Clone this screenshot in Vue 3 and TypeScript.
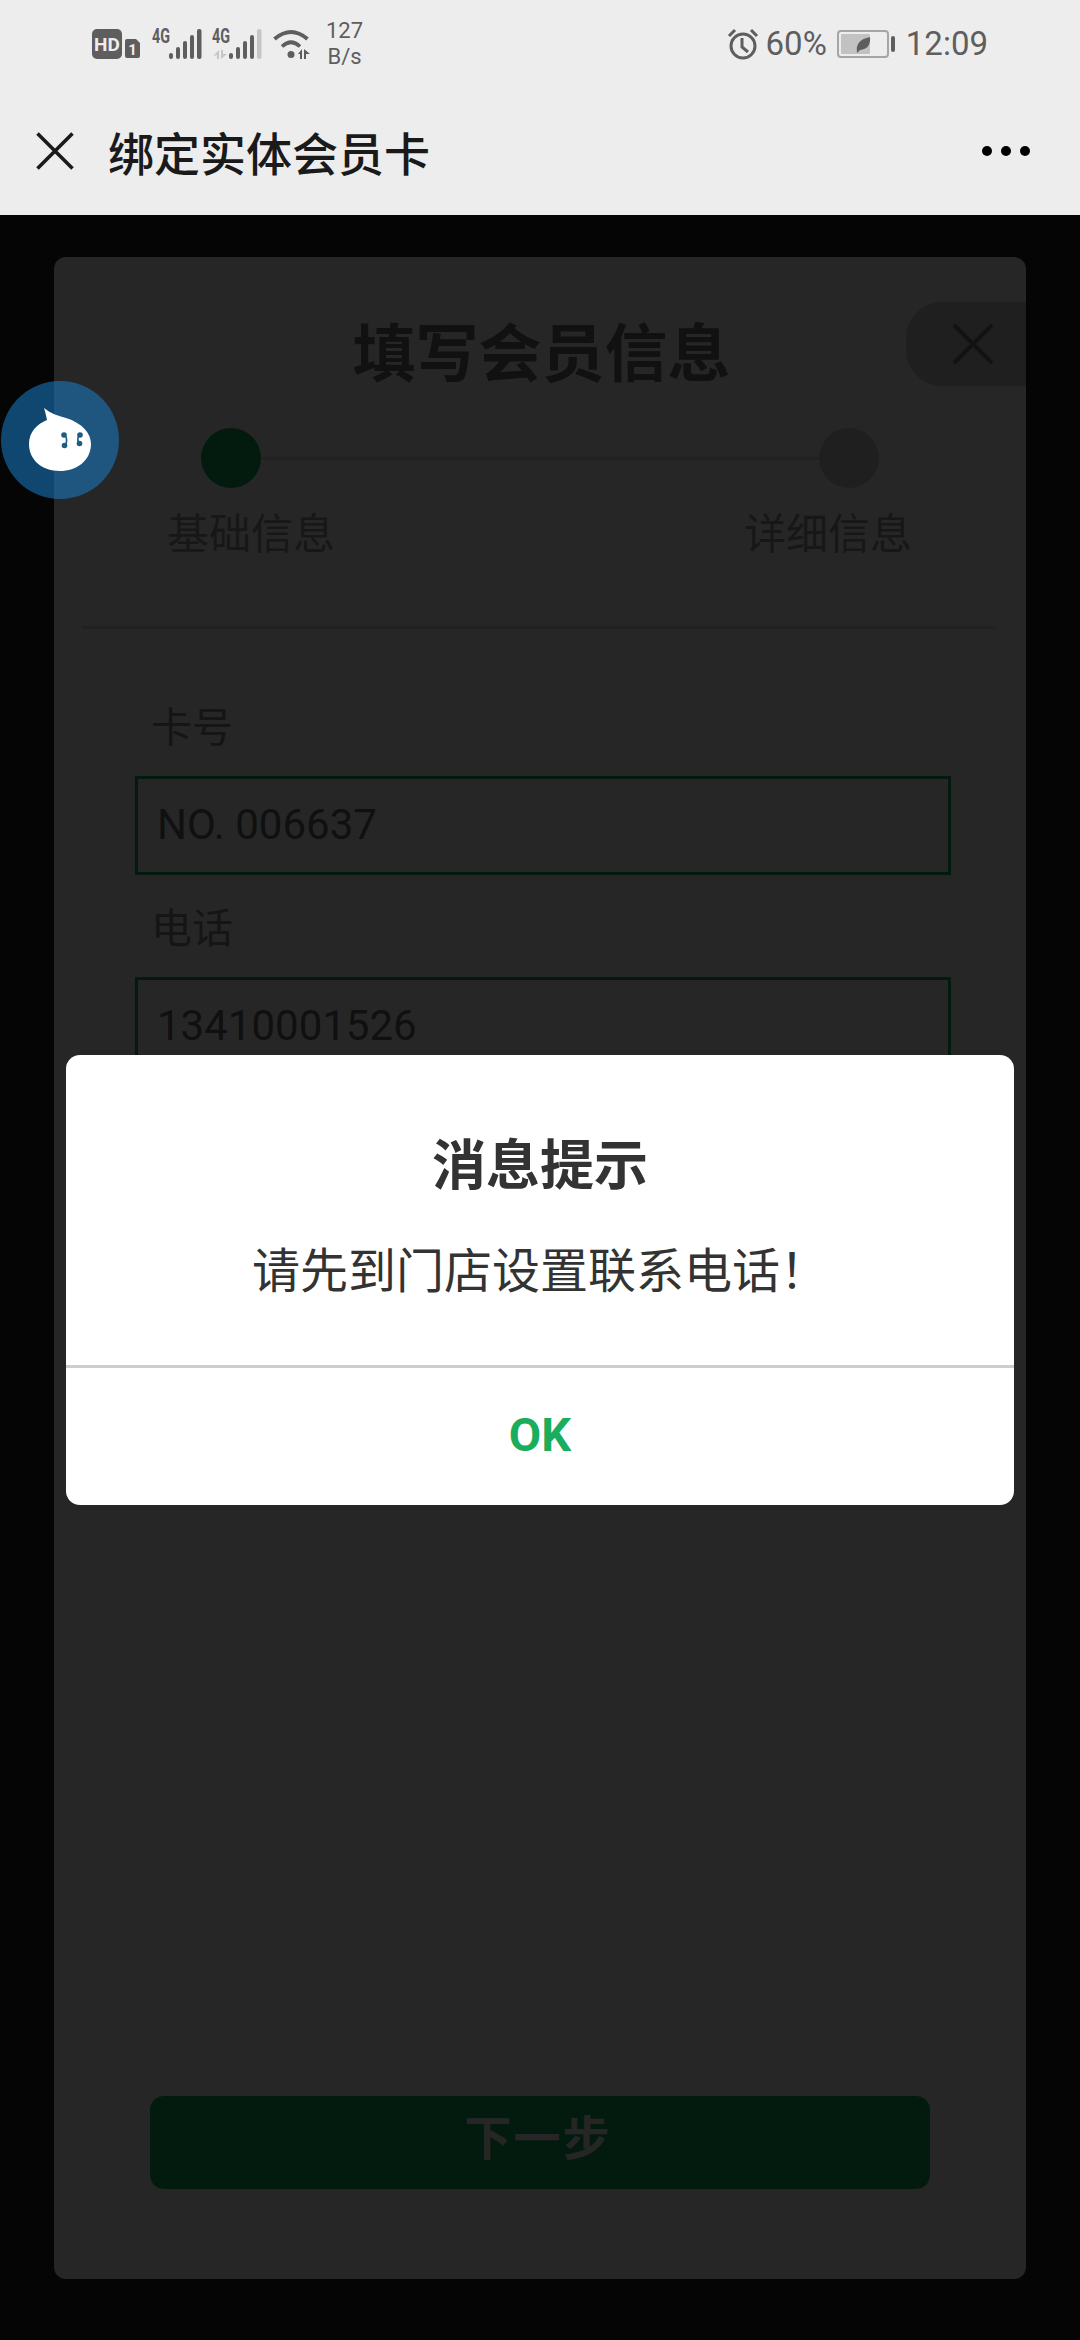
<script setup lang="ts">
const signals = [
  { id: 'sim1', arrows: false, lastColor: '#5e5e5e' },
  { id: 'sim2', arrows: true, lastColor: '#c6c6c6' },
];

const bars = [
  { x: 17, h: 6 },
  { x: 24, h: 12 },
  { x: 31, h: 18 },
  { x: 38, h: 24 },
];
</script>

<template>
  <div class="page">
    <header class="top">
      <div class="status">
        <div class="status-left">
          <svg class="hd" width="48" height="30" viewBox="0 0 48 30">
            <rect width="30" height="30" rx="5" fill="#5e5e5e" />
            <text x="15" y="21.5" text-anchor="middle" class="hd-text">HD</text>
            <path d="M35 10h9l4 4v13a2 2 0 0 1-2 2H35a2 2 0 0 1-2-2V12a2 2 0 0 1 2-2z" fill="#5e5e5e" />
            <text x="40.5" y="25.5" text-anchor="middle" class="sim-text">1</text>
          </svg>
          <svg
            v-for="s in signals"
            :key="s.id"
            class="signal"
            width="52"
            height="40"
            viewBox="0 -6 52 40"
          >
            <text x="0" y="16" class="four-g" textLength="18" lengthAdjust="spacingAndGlyphs">4G</text>
            <rect
              v-for="b in bars"
              :key="b.x"
              :x="b.x"
              :y="32 - b.h"
              width="4"
              :height="b.h"
              rx="2"
              fill="#5e5e5e"
            />
            <rect x="45" y="2" width="4.5" height="30" rx="2" :fill="s.lastColor" />
            <path v-if="s.arrows" d="M1 29l6-6v9H5v-4zM9 23h2v4l4 0-6 5z" fill="#c6c6c6" />
          </svg>
          <svg class="wifi" width="37" height="30" viewBox="0 0 37 30">
            <path d="M1.500 10Q18 -4 34.500 10" fill="none" stroke="#5e5e5e" stroke-width="4" />
            <path d="M9 17.500Q18 9 27 17.500" fill="none" stroke="#5e5e5e" stroke-width="3.6" />
            <circle cx="18" cy="25.500" r="3.500" fill="#5e5e5e" />
            <path d="M25 25l4-5v10h-2v-5zM31 20l6 5-4 0v5h-2z" fill="#5e5e5e" />
          </svg>
          <div class="speed"><span>127</span><span>B/s</span></div>
        </div>
        <div class="status-right">
          <svg width="32" height="32" viewBox="0 0 32 32">
            <circle cx="16" cy="18" r="12" fill="none" stroke="#5e5e5e" stroke-width="3" />
            <path d="M15 10v9l6 5" fill="none" stroke="#5e5e5e" stroke-width="3" />
            <path d="M2 8l6-6M30 8l-6-6" fill="none" stroke="#5e5e5e" stroke-width="3" />
          </svg>
          <span class="pct">60%</span>
          <svg class="battery" width="59" height="28" viewBox="0 0 59 28">
            <rect x="1" y="1" width="50" height="26" rx="3" fill="none" stroke="#a5a5a5" stroke-width="2" />
            <rect x="4" y="4" width="29" height="20" rx="1" fill="#c2c2c2" />
            <rect x="54" y="6" width="4" height="16" rx="2" fill="#5e5e5e" />
            <path d="M20 22Q18 10 33 7Q34 19 23 20L20 23z" fill="#5e5e5e" />
          </svg>
          <span class="time">12:09</span>
        </div>
      </div>
      <nav class="nav">
        <svg width="38" height="38" viewBox="0 0 38 38">
          <path d="M1.500 1.500L36.500 36.500M36.500 1.500L1.500 36.500" fill="none" stroke="#1a1a1a" stroke-width="3.6" />
        </svg>
        <h1 class="nav-title">绑定实体会员卡</h1>
        <div class="dots"><i></i><i></i><i></i></div>
      </nav>
    </header>

    <main class="body">
      <section class="card">
        <div class="card-close">
          <svg width="42" height="42" viewBox="0 0 42 42">
            <path d="M2 2L40 40M40 2L2 40" fill="none" stroke="#777" stroke-width="4" />
          </svg>
        </div>
        <h2 class="card-title">填写会员信息</h2>
        <div class="steps">
          <span class="step-dot on"></span>
          <span class="step-line"></span>
          <span class="step-dot"></span>
        </div>
        <div class="step-names">
          <span>基础信息</span>
          <span>详细信息</span>
        </div>
        <div class="rule"></div>
        <div class="fields">
          <div class="field">
            <label>卡号</label>
            <div class="input">NO. 006637</div>
          </div>
          <div class="field">
            <label>电话</label>
            <div class="input">13410001526</div>
          </div>
        </div>
        <button class="next">下一步</button>
      </section>

      <div class="mask"></div>

      <svg class="bot" width="120" height="120" viewBox="0 0 120 120">
        <circle cx="60" cy="60" r="59" fill="rgba(24,131,207,0.53)" />
        <path
          d="M44 28C50 33 58 36 66 38C82 43 91 53 91 64C91 81 76 91 60 91C42 91 29 80 29 64C29 52 37 44 47 40C46 35 45 31 44 28Z"
          fill="#fff"
        />
        <g fill="#1d5c83">
          <circle cx="64" cy="55" r="2.800" />
          <circle cx="64.500" cy="65.500" r="2.800" />
          <circle cx="80" cy="55" r="2.800" />
          <circle cx="79.500" cy="63.500" r="2.800" />
        </g>
        <path d="M65 55Q68 60 65.500 65M79 55Q77 59 78.500 63" fill="none" stroke="#1d5c83" stroke-width="1.600" />
      </svg>

      <div class="dialog">
        <div class="dialog-body">
          <h3>消息提示</h3>
          <p>请先到门店设置联系电话！</p>
        </div>
        <div class="dialog-foot">OK</div>
      </div>
    </main>
  </div>
</template>

<style scoped>
.page {
  width: 1080px;
  height: 2340px;
  display: flex;
  flex-direction: column;
  font-family: Roboto, "Noto Sans CJK SC", sans-serif;
  overflow: hidden;
}

.top {
  background: #ededed;
  height: 215px;
  flex: none;
}

.status {
  height: 91px;
  padding: 0 92px 3px 92px;
  box-sizing: border-box;
  display: flex;
  align-items: center;
  justify-content: space-between;
  color: #5e5e5e;
}

.status-left,
.status-right {
  display: flex;
  align-items: center;
}

.hd-text {
  font: 700 19px Roboto, sans-serif;
  fill: #ededed;
}

.sim-text {
  font: 700 15px Roboto, sans-serif;
  fill: #ededed;
}

.four-g {
  font: 700 20px Roboto, sans-serif;
  fill: #5e5e5e;
}

.signal {
  margin: -6px 0 0 12px;
}

.signal + .signal {
  margin-left: 8px;
}

.wifi {
  margin-left: 9px;
}

.speed {
  display: flex;
  flex-direction: column;
  align-items: center;
  margin-left: 16px;
  font-size: 22px;
  line-height: 26px;
}

.pct,
.time {
  font-size: 33px;
  line-height: 40px;
}

.pct {
  margin-left: 7px;
}

.battery {
  margin-left: 10px;
}

.time {
  margin-left: 10px;
}

.nav {
  height: 120px;
  padding: 0 50px 0 36px;
  display: flex;
  align-items: center;
}

.nav-title {
  margin: 0 0 0 34px;
  flex: 1;
  font-size: 46px;
  font-weight: 500;
  color: #1a1a1a;
}

.dots {
  display: flex;
  gap: 9px;
}

.dots i {
  width: 10px;
  height: 10px;
  border-radius: 50%;
  background: #000;
}

.body {
  flex: 1;
  position: relative;
  background: #212121;
  padding: 42px 54px 61px;
  display: flex;
}

.card {
  flex: 1;
  position: relative;
  background: #fff;
  border-radius: 12px;
  display: flex;
  flex-direction: column;
  overflow: hidden;
}

.card-close {
  position: absolute;
  top: 45px;
  right: 0;
  width: 120px;
  height: 84px;
  background: #cfcfcf;
  border-radius: 36px 0 0 36px;
  box-sizing: border-box;
  padding: 21px 0 0 46px;
}

.card-title {
  margin: 58px 0 0;
  padding-left: 3px;
  text-align: center;
  font-size: 63px;
  line-height: 80px;
  font-weight: 700;
  color: #707070;
}

.steps {
  margin-top: 33px;
  padding: 0 147px;
  display: flex;
  align-items: center;
}

.step-dot {
  width: 60px;
  height: 60px;
  border-radius: 50%;
  background: #cfcfcf;
  flex: none;
}

.step-dot.on {
  background: #1aad5e;
}

.step-line {
  flex: 1;
  height: 3px;
  background: #e0e0e0;
}

.step-names {
  margin-top: 19px;
  padding: 0 114px 0 113px;
  display: flex;
  justify-content: space-between;
  font-size: 42px;
  line-height: 56px;
  color: #999;
}

.rule {
  margin: 63px 31px 0 28px;
  height: 3px;
  background: #dcdcdc;
}

.fields {
  margin-top: 71px;
  padding: 0 75px 0 81px;
}

.field {
  margin-bottom: 26px;
}

.field label {
  display: block;
  padding-left: 16px;
  font-size: 41px;
  line-height: 56px;
  color: #8c8c8c;
}

.input {
  margin-top: 20px;
  height: 99px;
  box-sizing: border-box;
  border: 3px solid #1aad5e;
  padding: 0 0 2px 19px;
  display: flex;
  align-items: center;
  font-size: 42px;
  color: #6a6a6a;
}

.next {
  margin: auto 96px 90px;
  height: 93px;
  border: 0;
  border-radius: 14px;
  background: #1aad5e;
  color: #fff;
  font-family: inherit;
  font-size: 47px;
  font-weight: 700;
  letter-spacing: 2px;
  padding: 0 4px 16px 0;
}

.mask {
  position: absolute;
  inset: 0;
  background: rgba(0, 0, 0, 0.85);
}

.bot {
  position: absolute;
  left: 0;
  top: 165px;
}

.dialog {
  position: absolute;
  left: 66px;
  top: 840px;
  width: 948px;
  height: 450px;
  background: #fff;
  border-radius: 14px;
  display: flex;
  flex-direction: column;
  overflow: hidden;
}

.dialog-body {
  flex: none;
  box-sizing: border-box;
  padding-top: 76px;
  border-bottom: 3px solid #cdcdcd;
  height: 313px;
  text-align: center;
  color: #333;
}

.dialog-body h3 {
  margin: 0;
  font-size: 54px;
  line-height: 72px;
  font-weight: 700;
}

.dialog-body p {
  margin: 36px 0 0;
  font-size: 48px;
  line-height: 66px;
}

.dialog-foot {
  flex: 1;
  display: flex;
  align-items: center;
  justify-content: center;
  padding-bottom: 4px;
  font-size: 47px;
  font-weight: 700;
  color: #1aad5e;
}
</style>

<style>
html,
body {
  margin: 0;
  background: #000;
}
</style>
